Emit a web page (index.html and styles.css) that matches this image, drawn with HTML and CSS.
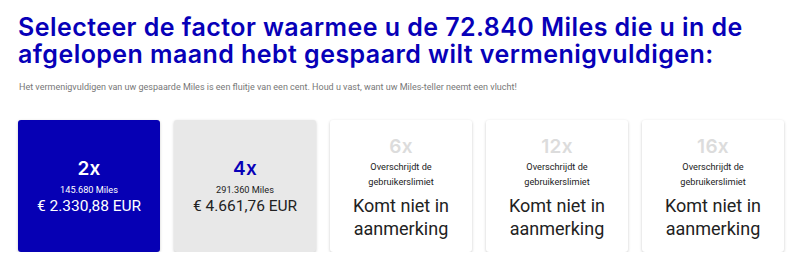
FILE: index.html
```
<!DOCTYPE html>
<html lang="nl">
<head>
<meta charset="utf-8">
<link rel="stylesheet" href="styles.css">
</head>
<body>
<main class="page">
  <h1 class="title">Selecteer de factor waarmee u de 72.840 Miles die u in de afgelopen maand hebt gespaard wilt vermenigvuldigen:</h1>
  <p class="intro">Het vermenigvuldigen van uw gespaarde Miles is een fluitje van een cent. Houd u vast, want uw Miles-teller neemt een vlucht!</p>
  <div class="cards">
    <div class="card card-active">
      <div class="factor">2x</div>
      <div class="miles">145.680 Miles</div>
      <div class="amount">€ 2.330,88 EUR</div>
    </div>
    <div class="card card-option">
      <div class="factor">4x</div>
      <div class="miles">291.360 Miles</div>
      <div class="amount">€ 4.661,76 EUR</div>
    </div>
    <div class="card card-disabled">
      <div class="factor">6x</div>
      <div class="note">Overschrijdt de gebruikerslimiet</div>
      <div class="status">Komt niet in aanmerking</div>
    </div>
    <div class="card card-disabled">
      <div class="factor">12x</div>
      <div class="note">Overschrijdt de gebruikerslimiet</div>
      <div class="status">Komt niet in aanmerking</div>
    </div>
    <div class="card card-disabled">
      <div class="factor">16x</div>
      <div class="note">Overschrijdt de gebruikerslimiet</div>
      <div class="status">Komt niet in aanmerking</div>
    </div>
  </div>
</main>
</body>
</html>
```
FILE: styles.css
```
html, body {
  margin: 0;
  padding: 0;
  background: #ffffff;
}
.page {
  padding: 14px 16px 0 18px;
  font-family: Roboto, "Liberation Sans", sans-serif;
}
.title {
  margin: 0;
  font-family: Inter, "Open Sans", sans-serif;
  font-weight: 600;
  font-size: 25px;
  line-height: 27px;
  color: #0700b8;
  letter-spacing: 0.44px;
  max-width: 740px;
}
.intro {
  margin: 13px 0 0 1px;
  font-size: 9px;
  line-height: 12px;
  color: #777777;
}
.cards {
  display: flex;
  gap: 14px;
  margin-top: 27px;
}
.card {
  width: 142px;
  height: 132px;
  box-sizing: border-box;
  border-radius: 3px;
  box-shadow: 0 1px 3px rgba(0, 0, 0, 0.22);
  display: flex;
  flex-direction: column;
  align-items: center;
  justify-content: center;
  text-align: center;
  background: #ffffff;
  color: #222222;
}
.factor {
  font-family: Inter, "Open Sans", sans-serif;
  font-weight: 600;
  font-size: 19px;
  line-height: 24px;
  letter-spacing: 0.3px;
}
.miles {
  font-size: 9.2px;
  line-height: 12px;
  margin-top: 3px;
}
.amount {
  font-size: 15.5px;
  line-height: 20px;
}
.card-active {
  background: #0600b4;
  color: #ffffff;
}
.card-option {
  background: #e8e8e8;
}
.card-option .factor {
  color: #0700b8;
}
.card-disabled {
  padding-top: 3px;
}
.card-disabled .factor {
  color: #dcdcdc;
}
.note {
  font-size: 9.2px;
  line-height: 15px;
  padding: 0 20px;
}
.status {
  font-size: 18px;
  line-height: 23px;
  margin-top: 5px;
  padding: 0 20px;
}
```
